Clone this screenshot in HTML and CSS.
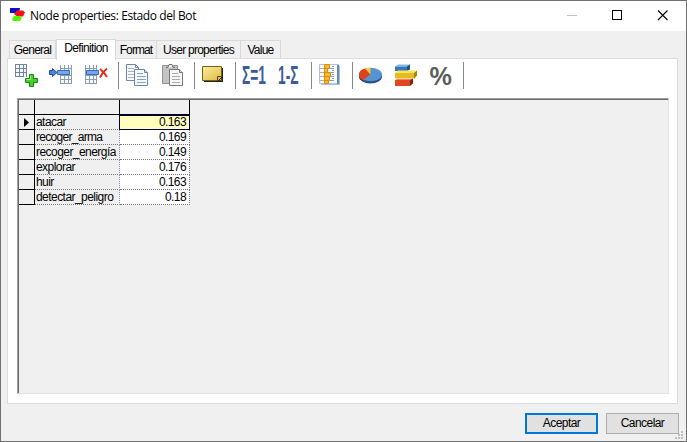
FILE: index.html
```html
<!DOCTYPE html>
<html lang="es">
<head>
<meta charset="utf-8">
<title>Node properties: Estado del Bot</title>
<link rel="stylesheet" href="styles.css">
</head>
<body>
<div class="window">
  <header class="titlebar">
    <svg class="app-icon" width="16" height="16" viewBox="0 0 16 16"><path d="M1 1h10l-1 5H1z" fill="#0b10c8"/><path d="M5 7l3-3.500h6l2 2-2 4H8z" fill="#f5101c"/><path d="M3 12l2-3h6l2 2-2 3H4z" fill="#55f500"/></svg>
    <h1 class="title">Node properties: Estado del Bot</h1>
    <svg class="controls" width="110" height="30" viewBox="0 0 110 30" fill="none" shape-rendering="crispEdges"><path d="M0 14.500h10" stroke="#c4c4c4"/><path d="M45.500 9.500h9v9h-9z" stroke="#000"/><path d="M91 9.500l9.500 9.500M100.500 9.500L91 19" stroke="#000" stroke-width="1.100" shape-rendering="auto"/></svg>
  </header>
  <nav class="tabs">
    <div class="tab general"><span>General</span></div>
    <div class="tab definition"><span>Definition</span></div>
    <div class="tab format"><span>Format</span></div>
    <div class="tab user"><span>User properties</span></div>
    <div class="tab value"><span>Value</span></div>
  </nav>
  <main class="panel">
    <div class="toolbar">
      <div class="group">
        <svg viewBox="0 0 24 24"><path d="M1 1h12v13H1z" fill="#f2f7fb"/><path d="M1.500 1v13M5.500 1v13M9.500 1v13M12.500 1v13M1 1.500h12M1 5.500h12M1 9.500h12M1 13.500h9" stroke="#71869e" fill="none"/><path d="M15.500 11.500h4v4h4v4h-4v4h-4v-4h-4v-4h4z" fill="#46cf28" stroke="#17861a"/><path d="M16.500 12.500v4h-4" stroke="#a4f078" fill="none"/></svg>
        <svg viewBox="0 0 24 24"><path d="M11 2h12v19H11z" fill="#f6f9fc"/><path d="M11.500 2v19M15.500 2v19M19.500 2v19M22.500 2v19M11 5.500h12M11 12.500h12M11 16.500h12M11 20.500h12" stroke="#8c9caf" fill="none"/><path d="M8.500 7.500h12v4h-12z" fill="#75a6f4" stroke="#3b68b8"/><path d="M.5 7.500h3v-2L8 9.500l-4.500 4v-2h-3z" fill="#4f83d6" stroke="#244f98"/></svg>
        <svg viewBox="0 0 24 24"><path d="M1 2h12v19H1z" fill="#f6f9fc"/><path d="M1.500 2v19M5.500 2v19M9.500 2v19M12.500 2v19M1 5.500h12M1 12.500h12M1 16.500h12M1 20.500h12" stroke="#8c9caf" fill="none"/><path d="M2.500 7.500h12v4h-12z" fill="#75a6f4" stroke="#3b68b8"/><path d="M16 6q4 3 7 8M23 5.500q-4 3-7 9" stroke="#df2d18" stroke-width="2" fill="none"/></svg>
      </div>
      <div class="group pair">
        <svg viewBox="0 0 24 24"><g fill="#f5f8fb" stroke="#7186a0"><path d="M1.500 1.500h9l3 3v13h-12z"/><path d="M10.500 1.500v3h3" fill="none"/><path d="M3 5.500h6M3 8.500h6M3 11.500h6M3 14.500h6" stroke="#a8b7c6"/><path d="M9.500 6.500h10l3 3v13h-13z"/><path d="M19.500 6.500v3h3" fill="#ccd9e6"/><path d="M12 10.500h6M12 13.500h9M12 16.500h9M12 19.500h9" stroke="#8da2b7"/></g></svg>
        <svg viewBox="0 0 24 24"><path d="M1.500 2.500h15v18h-15z" fill="#c3c3c3" stroke="#929292"/><path d="M5 4.500h2l1-3h3l1 3h2" fill="#eee" stroke="#737373"/><path d="M8.500 6.500h10l3 3v13h-13z" fill="#f7f7f7" stroke="#777"/><path d="M18.500 6.500v3h3" fill="#ddd" stroke="#777"/><path d="M11 10.500h6M11 13.500h8M11 16.500h8M11 19.500h8" stroke="#aaa"/></svg>
      </div>
      <div class="group">
        <svg viewBox="0 0 24 24"><defs><linearGradient id="note" x2="1" y2="1"><stop stop-color="#ffed9b"/><stop offset="1" stop-color="#dcb944"/></linearGradient></defs><path d="M3 5h19v14H3z" fill="#282413"/><path d="M1.500 3.500h19v14h-19z" fill="url(#note)" stroke="#75601e"/><path d="M16.500 17.500v-4h4v4z" fill="#dfbd45" stroke="#534414"/><path d="M17 18l4-4" stroke="#332a0c"/></svg>
      </div>
      <div class="group pair">
        <div class="sigma"><span>Σ=1</span></div>
        <div class="sigma"><span>1-Σ</span></div>
      </div>
      <div class="group">
        <svg viewBox="0 0 24 24"><path d="M3 3h19v19H3z" fill="#a9c3e2"/><path d="M1.500 1.500h19v19h-19z" fill="#f8fafc" stroke="#b0c3d8"/><path d="M1.500 5.500h5M1.500 9.500h5M1.500 13.500h5M1.500 17.500h5" stroke="#c5a988"/><path d="M6.500 1.500h5v4h-2v4h3v4h-1v4h-1v3h-4zM6.500 5.500h3M6.500 9.500h4M6.500 13.500h5M6.500 17.500h4" fill="#fcb62c" stroke="#d38f18"/><path d="M12 5.500h4M13 9.500h3M13 13.500h3M12 17.500h4M14 3.500h2M14 7.500h2M14 11.500h2M14 15.500h2" stroke="#8b98a8"/><path d="M19 2h2v19h-2z" fill="#6489b5"/></svg>
      </div>
      <div class="group last">
        <svg viewBox="0 0 24 24"><ellipse cx="11.500" cy="13.500" rx="11.500" ry="7" fill="#245287"/><ellipse cx="11.500" cy="11.500" rx="11.500" ry="6.800" fill="#5594d0"/><path d="M11.500 11.500L4 17Q0 15 0 11.500Q0 7 6 5.500z" fill="#df421b"/><path d="M0 11.500v2q0 2.500 4 5V17Q0 15 0 11.500" fill="#a7280b"/><path d="M11.500 11.500L6 5.500q2-1 5.500-.8z" fill="#f2ca35"/></svg>
        <svg viewBox="0 0 24 24"><path d="M1 3.500l3-2h13l-2 2z" fill="#84b9e5"/><path d="M13 3.500l3-2v5L13 8z" fill="#24527e"/><path d="M1 3.500h12V8H1z" fill="#3478b8"/><path d="M1 10l3-2.500h19L20 10z" fill="#ffe45d"/><path d="M20 10l3-2.500v5L20 16z" fill="#a8840e"/><path d="M1 10h19v5.500H1z" fill="#e2bd20"/><path d="M1 17l2-1h16l-3 1z" fill="#ff8061"/><path d="M16 17l3-1.500v5l-3 2.500z" fill="#8c210c"/><path d="M1 17h15v6H1z" fill="#de4721"/></svg>
        <div class="percent"><span>%</span></div>
      </div>
    </div>
    <section class="sheet">
      <div class="grid">
        <div class="row head"><i></i><b></b><b></b></div>
        <div class="row active"><i><svg width="6" height="9" viewBox="0 0 6 9"><path d="M0 0l5 4.500L0 9z"/></svg></i><span>atacar</span><em>0.163</em></div>
        <div class="row"><i></i><span class="tight">recoger_arma</span><em>0.169</em></div>
        <div class="row"><i></i><span>recoger_energía</span><em>0.149</em></div>
        <div class="row"><i></i><span>explorar</span><em>0.176</em></div>
        <div class="row"><i></i><span>huir</span><em>0.163</em></div>
        <div class="row"><i></i><span>detectar_peligro</span><em>0.18</em></div>
      </div>
    </section>
  </main>
  <footer class="actions">
    <button class="primary">Aceptar</button>
    <button>Cancelar</button>
  </footer>
  <svg class="grip" width="8" height="8" viewBox="0 0 8 8"><path d="M6 0h2v2H6zM3 3h2v2H3zM6 3h2v2H6zM0 6h2v2H0zM3 6h2v2H3zM6 6h2v2H6z" fill="#bdbdbd"/></svg>
</div>
</body>
</html>
```
FILE: styles.css
```css
* { box-sizing: border-box; }
body { margin: 0; background: #f0f0f0; }
.window { position: relative; width: 687px; height: 442px; border: 1px solid #707070; background: #f0f0f0; font-family: "Liberation Sans", Arial, sans-serif; font-size: 12px; color: #000; display: flex; flex-direction: column; }
svg { display: block; flex: none; }
.titlebar { height: 30px; background: #fff; display: flex; align-items: flex-start; padding-left: 8px; flex: none; }
.app-icon { margin-top: 6px; }
.title { flex: none; margin: 0 0 0 5px; font: 400 12px/29px "Open Sans", "Noto Sans", sans-serif; white-space: nowrap; letter-spacing: -.4px; width: 537px; }
.tabs { display: flex; align-items: flex-end; height: 28px; padding-left: 8px; flex: none; position: relative; z-index: 1; }
.tab { height: 18px; margin-bottom: 1px; border: 1px solid #d9d9d9; border-width: 1px 1px 0 0; display: flex; justify-content: center; line-height: 18px; white-space: nowrap; letter-spacing: -.75px; }
.general { width: 47px; border-left-width: 1px; }
.definition { width: 60px; height: 21px; margin-bottom: -1px; border-left-width: 1px; background: #fff; line-height: 17px; letter-spacing: -.65px; }
.format { width: 41px; letter-spacing: -.9px; }
.user { width: 84px; }
.value { width: 40px; }
.panel { width: 671px; height: 346px; margin: -1px 0 0 6px; border: 1px solid #dcdcdc; background: #fff; flex: none; padding: 0 8px 9px 9px; display: flex; flex-direction: column; }
.toolbar { height: 39px; display: flex; padding: 3px 0 0; flex: none; margin-left: -3px; }
.group { height: 27px; border-right: 1px solid #888; padding: 1px 10px 0 6px; display: flex; gap: 11px; flex: none; }
.group:first-child { padding-left: 0; }
.group svg { width: 24px; height: 24px; }
.pair { gap: 12px; padding-right: 9px; }
.sigma { width: 24px; height: 24px; color: #3c5c98; font: 700 25px/25px "Liberation Sans", sans-serif; }
.sigma span, .percent span { display: block; width: max-content; transform-origin: 0 50%; }
.sigma span { transform: scaleX(.55); }
.percent { width: 24px; height: 24px; color: #5c5c5c; font: 600 25px/25px "Open Sans", sans-serif; }
.percent span { transform: scaleX(1.08); }
.sheet { flex: 1; border: 1px solid #a0a0a0; border-right-color: #e3e3e3; border-bottom-color: #e3e3e3; background: #f0f0f0; box-shadow: inset 1px 1px #696969; padding: 1px 0 0 1px; }
.grid { width: 171px; }
.row { display: grid; grid-template-columns: 16px 85px 70px; height: 15px; line-height: 14px; }
.row i { border-right: 1px solid #000; border-bottom: 1px solid #000; display: flex; align-items: center; justify-content: flex-end; padding-right: 4px; }
.row b { border-right: 1px solid #000; border-bottom: 1px solid #000; }
.row span { padding-left: 1px; border-right: 1px dotted #8395b5; border-bottom: 1px dotted #777; letter-spacing: -.55px; white-space: nowrap; }
.row .tight { letter-spacing: -.7px; }
.row em { font-style: normal; text-align: right; background: #fff; padding-right: 3px; border-right: 1px dotted #777; border-bottom: 1px dotted #777; letter-spacing: -.6px; }
.active em { background: #ffffc0; outline: 1px solid #000040; outline-offset: -1px; margin-left: -1px; }
.actions { display: flex; gap: 8px; padding: 9px 0 0 524px; }
button { width: 73px; height: 21px; border: 1px solid #adadad; background: #e1e1e1; padding: 0; font: inherit; line-height: 17px; letter-spacing: -.55px; color: #000; }
.primary { border: 2px solid #0078d7; }
.grip { position: absolute; right: 3px; bottom: 2px; }
```
